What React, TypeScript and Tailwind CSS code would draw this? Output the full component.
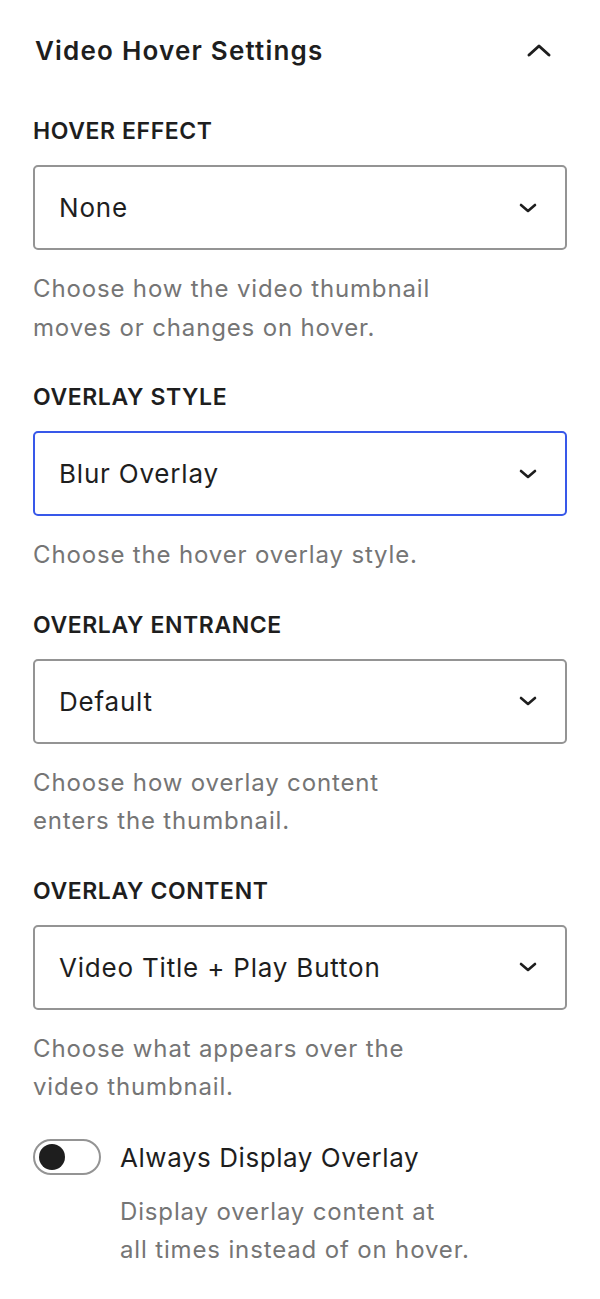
import React from "react";

const font = { fontFamily: "Inter, 'Noto Sans', sans-serif" };

function ChevronDown() {
  return (
    <svg width="20" height="12" viewBox="0 0 20 12" fill="none">
      <path d="M3 3 L10 9 L17 3" stroke="#1e1e1e" strokeWidth="2.6" strokeLinecap="round" strokeLinejoin="round" />
    </svg>
  );
}

function ChevronUp() {
  return (
    <svg width="28" height="18" viewBox="0 0 28 18" fill="none">
      <path d="M4 14 L14 5 L24 14" stroke="#1e1e1e" strokeWidth="3" strokeLinecap="round" strokeLinejoin="round" />
    </svg>
  );
}

function Field({
  label,
  value,
  help,
  focused,
}: {
  label: string;
  value: string;
  help: string[];
  focused?: boolean;
}) {
  return (
    <div className="flex flex-col">
      <div className="text-[23px] font-semibold uppercase leading-[28px] tracking-[0.6px] text-[#1e1e1e]">{label}</div>
      <div
        className={
          "mt-[20px] flex h-[85px] items-center justify-between rounded-[5px] bg-white pl-[24px] pr-[27px] " +
          (focused ? "border-[2.5px] border-[#3858e9]" : "border-[2px] border-[#949494]")
        }
      >
        <span className="text-[26px] tracking-[0.8px] text-[#1e1e1e]">{value}</span>
        <ChevronDown />
      </div>
      <div className="mt-[20px] text-[24px] leading-[38.5px] tracking-[0.85px] text-[#757575]">
        {help.map((h) => (
          <div key={h}>{h}</div>
        ))}
      </div>
    </div>
  );
}

export default function App() {
  return (
    <div className="min-h-[1299px] w-[600px] bg-white" style={font}>
      <div className="flex flex-col pl-[33px] pr-[33px]">
        <div className="flex h-[100px] items-center justify-between pl-[2px]">
          <span className="text-[26px] font-semibold tracking-[1.2px] text-[#1e1e1e]">Video Hover Settings</span>
          <span className="mr-[14px]">
            <ChevronUp />
          </span>
        </div>
        <div className="mt-[17px] flex flex-col gap-[36px]">
          <Field label="Hover Effect" value="None" help={["Choose how the video thumbnail", "moves or changes on hover."]} />
          <Field label="Overlay Style" value="Blur Overlay" help={["Choose the hover overlay style."]} focused />
          <Field label="Overlay Entrance" value="Default" help={["Choose how overlay content", "enters the thumbnail."]} />
          <Field label="Overlay Content" value="Video Title + Play Button" help={["Choose what appears over the", "video thumbnail."]} />
        </div>
        <div className="mt-[31px] flex items-center gap-[19px]">
          <div className="flex h-[36px] w-[68px] items-center rounded-full border-[2px] border-[#949494] bg-white pl-[4px]">
            <div className="h-[26px] w-[26px] rounded-full bg-[#1e1e1e]" />
          </div>
          <span className="text-[26px] tracking-[0.55px] text-[#1e1e1e]">Always Display Overlay</span>
        </div>
        <div className="mt-[16px] pl-[87px] text-[24px] leading-[38.5px] tracking-[0.85px] text-[#757575]">
          <div>Display overlay content at</div>
          <div>all times instead of on hover.</div>
        </div>
      </div>
    </div>
  );
}
